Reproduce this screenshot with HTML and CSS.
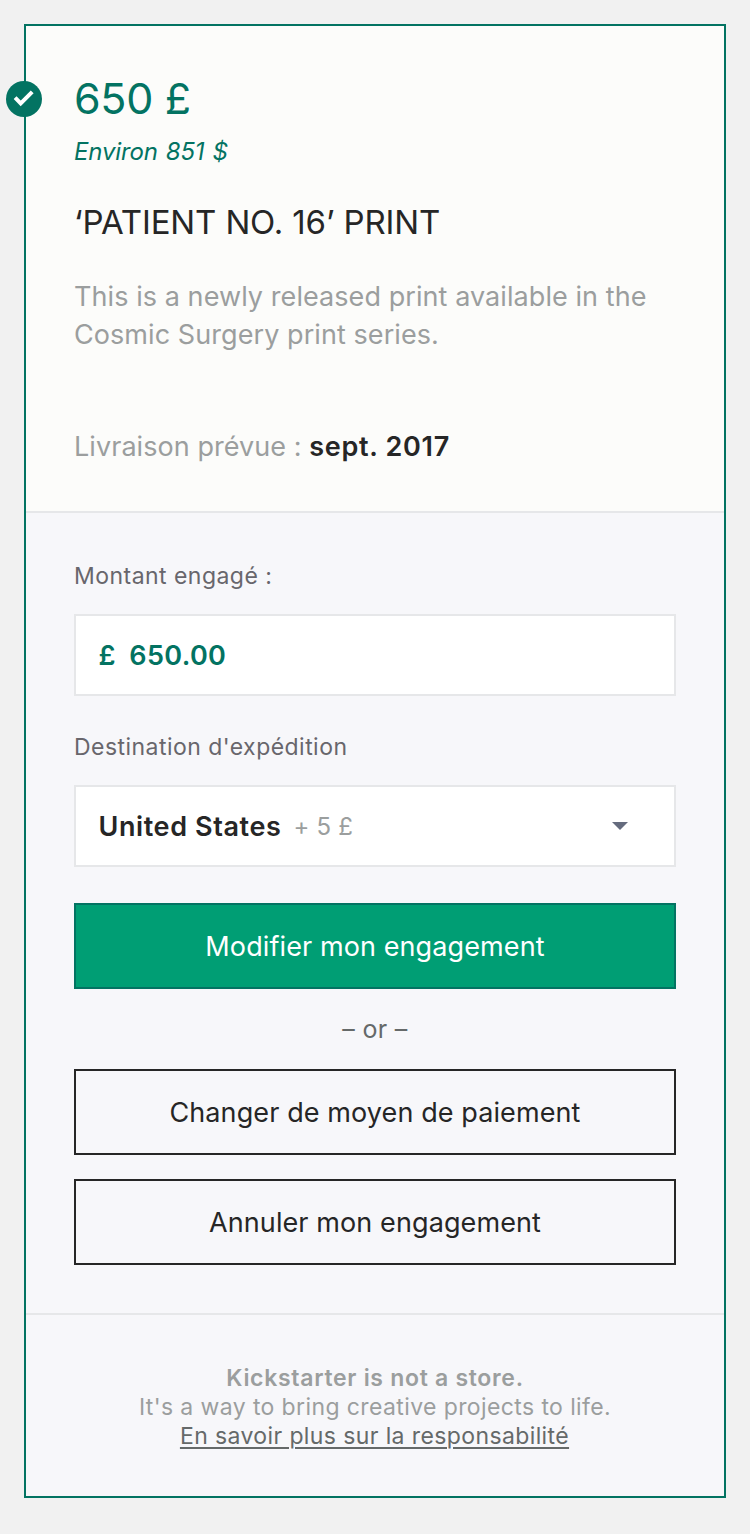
FILE: index.html
```html
<!DOCTYPE html>
<html lang="fr">
<head>
<meta charset="utf-8">
<title>Modifier mon engagement</title>
<link rel="stylesheet" href="styles.css">
</head>
<body>
<main class="card">
  <span class="badge"><svg width="36" height="36" viewBox="0 0 36 36"><circle cx="18" cy="18" r="18" fill="#037362"/><path d="M9.1 16.7l5.6 5.7L26.2 10.9" fill="none" stroke="#fff" stroke-width="4"/></svg></span>
  <section class="reward">
    <h1 class="price">650 £</h1>
    <p class="approx">Environ 851 $</p>
    <h2 class="title">‘PATIENT NO. 16’ PRINT</h2>
    <p class="desc">This is a newly released print available in the<br>Cosmic Surgery print series.</p>
    <p class="delivery"><span class="delivery-label">Livraison prévue :</span> <b>sept. 2017</b></p>
  </section>
  <form class="pledge">
    <label class="label">Montant engagé :</label>
    <div class="field amount"><span>£</span><span class="value">650.00</span></div>
    <label class="label ship-label">Destination d'expédition</label>
    <div class="field"><b class="country">United States</b><span class="fee">+ 5 £</span><svg class="caret" width="16" height="8" viewBox="0 0 16 8"><path d="M0 0h16L8 8z" fill="#656b7e"/></svg></div>
    <button type="button" class="button primary">Modifier mon engagement</button>
    <p class="or">– or –</p>
    <button type="button" class="button">Changer de moyen de paiement</button>
    <button type="button" class="button cancel">Annuler mon engagement</button>
  </form>
  <footer class="footer">
    <b class="notice">Kickstarter is not a store.</b>
    <span>It's a way to bring creative projects to life.</span>
    <a class="link">En savoir plus sur la responsabilité</a>
  </footer>
</main>
</body>
</html>
```
FILE: styles.css
```css
* { box-sizing: border-box; }
body { margin: 0; padding: 24px; background: #f1f1f1; font-family: Inter, "Liberation Sans", sans-serif; color: #262626; }
h1, h2, p { margin: 0; font-weight: 400; white-space: nowrap; }
b { font-weight: 600; }

.card { position: relative; height: 1474px; border: 2px solid #037362; background: #f7f7fa; display: flex; flex-direction: column; }
.badge { position: absolute; left: -20px; top: 55px; width: 36px; height: 36px; }
.badge svg { display: block; }

.reward { height: 487px; padding: 46px 48px 0; background: #fcfcfa; border-bottom: 2px solid #e6e7e9; }
.price { font-size: 43px; line-height: 52px; color: #037362; letter-spacing: -.3px; }
.approx { margin-top: 10px; font-size: 24px; line-height: 36px; font-style: italic; letter-spacing: -.15px; word-spacing: 1.4px; color: #037362; }
.title { margin-top: 28px; font-size: 33px; line-height: 48px; letter-spacing: -.14px; }
.desc { margin-top: 32px; font-size: 27px; line-height: 38px; letter-spacing: .07px; color: #9b9e9e; }
.delivery { margin-top: 74px; font-size: 27px; line-height: 38px; letter-spacing: .06px; }
.delivery b { letter-spacing: .7px; }
.delivery-label { color: #9b9e9e; }

.pledge { height: 802px; padding: 48px 48px 0; border-bottom: 2px solid #e6e7e9; display: flex; flex-direction: column; }
.label { font-size: 23px; line-height: 30px; letter-spacing: .46px; color: #68666c; align-self: flex-start; }
.ship-label { margin-top: 36px; }
.field { height: 82px; margin-top: 23px; border: 2px solid #e6e7e9; background: #fff; display: flex; align-items: center; padding: 0 23px 0 22.5px; font-size: 27px; }
.amount { color: #037362; font-weight: 600; letter-spacing: .35px; }
.value { margin-left: 13.5px; }
.country { letter-spacing: .6px; }
.fee { margin-left: 12px; font-size: 24px; letter-spacing: .2px; color: #9b9e9e; }
.caret { margin-left: auto; margin-right: 23px; }

.button { height: 86px; padding: 2px 0 0; border: 2px solid #262626; border-radius: 0; background: transparent; font: 400 27px/38px Inter, "Liberation Sans", sans-serif; letter-spacing: .1px; color: #262626; }
.primary { margin-top: 36px; background: #009e74; border-color: #037362; color: #fff; }
.or { height: 80px; line-height: 80px; font-size: 25px; letter-spacing: .3px; text-align: center; color: #656969; }
.cancel { margin-top: 24px; }

.footer { padding-top: 49px; display: flex; flex-direction: column; align-items: center; font-size: 23px; line-height: 29px; letter-spacing: .39px; color: #9b9e9e; }
.notice { letter-spacing: .7px; }
.link { margin-right: 1px; color: #656969; text-decoration: underline; text-decoration-thickness: 2px; text-underline-offset: 3px; }
```
